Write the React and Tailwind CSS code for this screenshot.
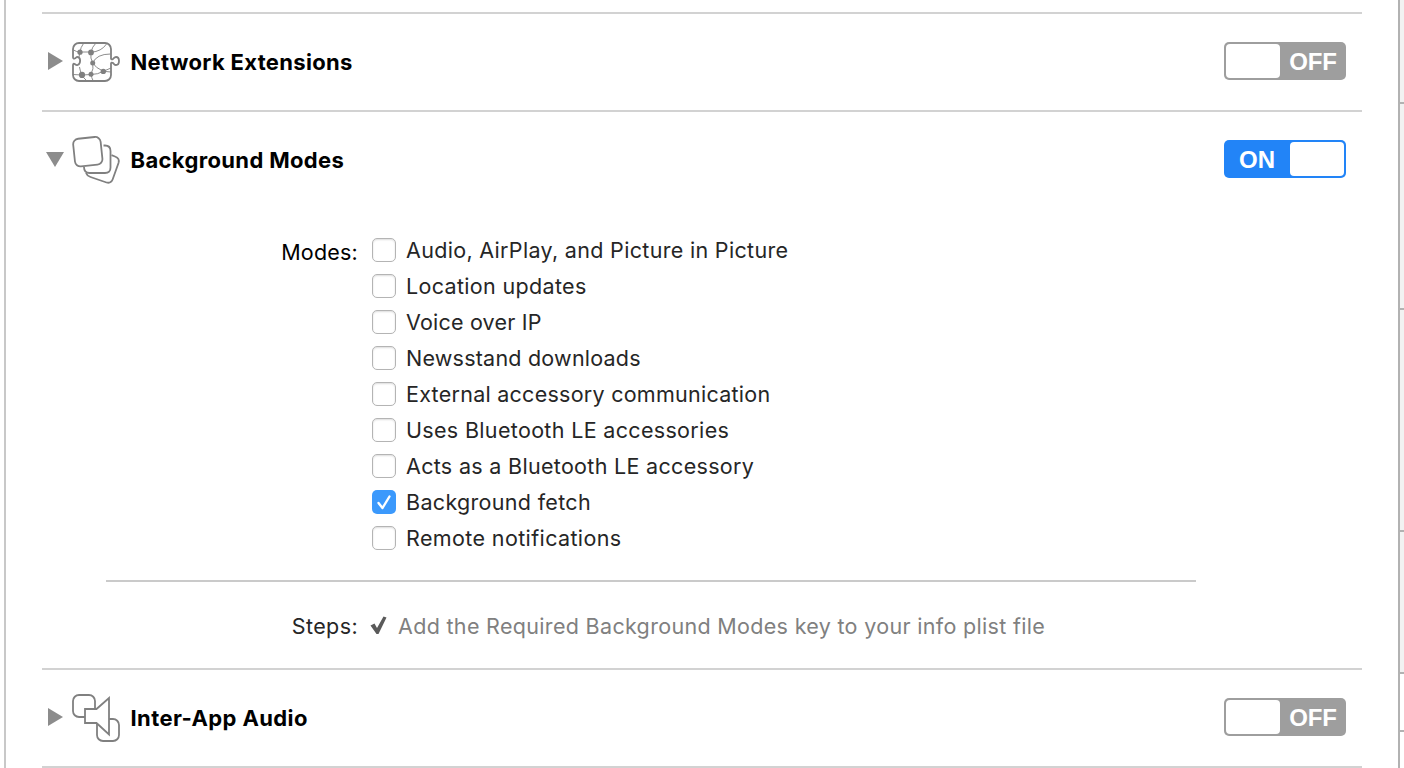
import React from "react";

const MODES = [
  ["Audio, AirPlay, and Picture in Picture", "tracking-[0.32px]"],
  ["Location updates", "tracking-[0.33px]"],
  ["Voice over IP", "tracking-[0.2px]"],
  ["Newsstand downloads", "tracking-[0.22px]"],
  ["External accessory communication", "tracking-[0.26px]"],
  ["Uses Bluetooth LE accessories", "tracking-[0.33px]"],
  ["Acts as a Bluetooth LE accessory", "tracking-[0.31px]"],
  ["Background fetch", "tracking-[0.32px]"],
  ["Remote notifications", "tracking-[0.38px]"],
];

function NetworkIcon() {
  return (
    <svg width="52" height="52" viewBox="0 0 52 52" fill="none" stroke="#808080">
      <g strokeWidth="0.9">
        <path d="M1.500 12q3 2 6.500 2h11M11.500 5.500q-3 4-3.500 8.500l-1 5" />
        <path d="M24 5q-4 4-5 9M34.500 6q-5 7.500-15.500 8.300M19 14.300q-1 6 1.700 10.700t10.600 8.300L39 30" />
        <path d="M38.500 16q-14 0-17.800 9Q22 31 19 36M39 34l-7.700-.7Q26 36.500 19 36.500L10 37l-9-.5" />
        <path d="M7.500 29q.5 4 2.500 8 1.500 3 4 5M19 36.500q.5 3 2 6" />
      </g>
      <g fill="#808080" stroke="none">
        <circle cx="8" cy="14.200" r="2.600" />
        <circle cx="19" cy="14.400" r="2.900" />
        <circle cx="20.700" cy="25" r="2.500" />
        <circle cx="31.300" cy="33.400" r="2.700" />
        <circle cx="10" cy="36.900" r="3.100" />
        <circle cx="19" cy="36.300" r="2.500" />
      </g>
      <path strokeWidth="1.800" strokeLinejoin="round" d="M7 5h26a6 6 0 0 1 6 6v9.500q.3 1.500 2 .5c1-.8 1.500-2 3-2 4 0 4 8 0 8-1.500 0-2-1.200-3-2q-1.700-1-2 .5V37a6 6 0 0 1-6 6H7a6 6 0 0 1-6-6V27q.2-1.800 1.700-1C4 27 4.500 27.500 5.500 27c3.500-1 3.500-7.500 0-8C4.500 18.700 4 20 2.700 20.500Q1.200 21 1 19.500V11a6 6 0 0 1 6-6Z" />
    </svg>
  );
}

function LayersIcon() {
  return (
    <svg width="52" height="52" viewBox="0 0 52 52" fill="none" stroke="#808080" strokeWidth="1.800">
      <path d="M39.500 19.200l3.500 1.300q5 1.800 3.500 6.500L40.800 43q-1.800 4.800-6.300 3.500L18.500 41q-3.500-1.200-4.500-4" />
      <path d="M31.500 9.500h1.500q5.500 0 5.500 5.500v16.500q0 5.500-5.500 5.500H17.500q-5.500 0-5.500-6" />
      <rect x="2" y="1.800" width="27.600" height="27.800" rx="5.500" transform="rotate(-6 15.700 15.700)" />
    </svg>
  );
}

function AudioIcon() {
  return (
    <svg width="52" height="52" viewBox="0 0 52 52" fill="none" stroke="#808080" strokeWidth="1.800">
      <path d="M13 23H7a6 6 0 0 1-6-6V7a6 6 0 0 1 6-6h10a6 6 0 0 1 6 6v8" />
      <path d="M37 25h4a6 6 0 0 1 6 6v10a6 6 0 0 1-6 6H31a6 6 0 0 1-6-6V29" />
      <path d="M13 15h11.500L37 4v36.500L24.500 29H13Z" />
    </svg>
  );
}

function Switch({ on }) {
  return on ? (
    <div className="mb-[2px] flex h-[38px] w-[122px] items-center rounded-[5px] bg-[#2284f7] p-[2px]">
      <span className="w-16 pr-[2px] pt-[1px] text-center font-['Liberation_Sans',sans-serif] text-2xl font-bold text-white">ON</span>
      <span className="h-[34px] w-[54px] rounded-[4px] bg-white" />
    </div>
  ) : (
    <div className="mb-[2px] flex h-[38px] w-[122px] items-center rounded-[5px] bg-[#9e9e9e] p-[2px]">
      <span className="h-[34px] w-[54px] rounded-[4px] bg-white" />
      <span className="w-16 pl-[2px] pt-[1px] text-center font-['Liberation_Sans',sans-serif] text-2xl font-bold tracking-[-0.2px] text-white">OFF</span>
    </div>
  );
}

function Header({ title, tracking, icon, open }) {
  return (
    <div className="flex h-24 items-center pr-4">
      <svg className="ml-1 shrink-0" width="26" height="26" viewBox="0 0 26 26" fill="#8c8c8c">
        {open ? <path d="M0 5h18L9 20Z" /> : <path d="M2 3v18l15-9Z" />}
      </svg>
      <div className="mt-1 h-[52px] w-[58px] shrink-0">{icon}</div>
      <h2 className={`grow whitespace-nowrap pl-[0.5px] text-[22px] font-bold text-black ${tracking}`}>{title}</h2>
      <Switch on={open} />
    </div>
  );
}

function Checkbox({ checked }) {
  return checked ? (
    <span className="flex size-6 items-center justify-center rounded-[5px] bg-[#3b99fc]">
      <svg width="24" height="24" viewBox="0 0 24 24" fill="none" stroke="white" strokeWidth="2.400" strokeLinecap="round" strokeLinejoin="round"><path d="m6.500 13 4 5 7-11.500" /></svg>
    </span>
  ) : (
    <span className="size-6 rounded-[5px] border border-[#b4b4b4] bg-white shadow-[inset_0_1px_2px_#dcdcdc]" />
  );
}

export default function App() {
  return (
    <div className="flex h-[768px] w-[1404px] overflow-hidden bg-white font-['Inter',sans-serif] text-[21.5px] text-[#262626]">
      <div className="w-[6px] shrink-0 border-r-2 border-[#c8c8c8]" />
      <main className="w-[1392px] shrink-0 pl-9 pr-9 pt-3">
        <section className="border-t-2 border-[#d2d2d2]">
          <Header title="Network Extensions" tracking="tracking-[0.32px]" icon={<NetworkIcon />} />
        </section>
        <section className="h-[558px] border-t-2 border-[#d2d2d2]">
          <Header title="Background Modes" tracking="tracking-[0.35px]" icon={<LayersIcon />} open />
          <div className="ml-16 flex h-[374px] w-[1090px] border-b-2 border-[#cacaca] pt-6">
            <div className="mr-[14px] w-[252px] whitespace-nowrap pt-[2px] text-right leading-9 tracking-[0.2px] text-black">Modes:</div>
            <ul>
              {MODES.map(([label, tracking], i) => (
                <li key={label} className="flex h-9 items-center gap-[10px]">
                  <Checkbox checked={i === 7} />
                  <span className={`whitespace-nowrap ${tracking}`}>{label}</span>
                </li>
              ))}
            </ul>
          </div>
          <div className="ml-16 flex h-[88px] items-center">
            <span className="w-[252px] text-right tracking-[0.4px]">Steps:</span>
            <svg className="ml-[11px] shrink-0" width="20" height="24" viewBox="0 0 20 24" fill="#5a5a5a"><path d="M1.500 11.500 5.500 9.500 8 14 14.500 2.500l3 1L9.500 20H7.500Z" /></svg>
            <span className="ml-[9px] whitespace-nowrap tracking-[0.32px] text-[#808080]">Add the Required Background Modes key to your info plist file</span>
          </div>
        </section>
        <section className="border-y-2 border-[#d2d2d2]">
          <Header title="Inter-App Audio" tracking="tracking-[0.4px]" icon={<AudioIcon />} />
        </section>
      </main>
      <aside className="w-[6px] shrink-0 border-l-2 border-[#b2b2b2] bg-[#f2f2f2]">
        <div className="h-[104px] border-b-2 border-[#b2b2b2]" />
        <div className="h-[206px] border-b-2 border-[#b2b2b2]" />
        <div className="h-[222px] border-b-2 border-[#b2b2b2]" />
        <div className="h-[142px] border-b-2 border-[#b2b2b2]" />
        <div className="h-[58px] border-b-2 border-[#b2b2b2] bg-white" />
        <div className="h-9 bg-white" />
      </aside>
    </div>
  );
}
